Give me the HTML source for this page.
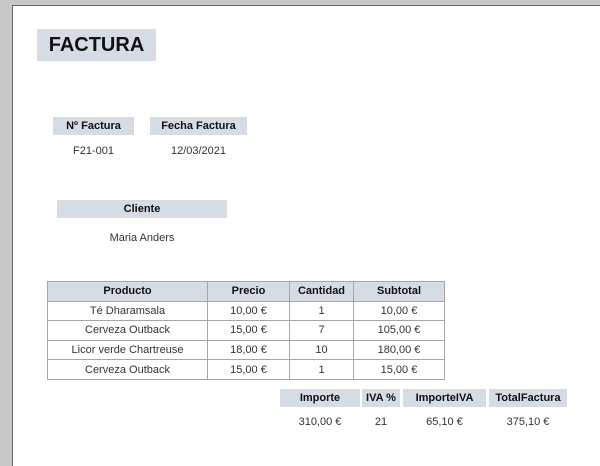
<!DOCTYPE html>
<html><head><meta charset="utf-8"><style>
body{margin:0;width:600px;height:455px;background:#c8c8c8;position:relative;overflow:hidden;font-family:"Liberation Sans",sans-serif;}
.page{position:absolute;left:12px;top:5px;width:600px;height:460px;background:#fff;border-left:1px solid #6a6a6a;border-top:1px solid #6a6a6a;}
.h{position:absolute;background:#d6dce4;font-weight:bold;font-size:11px;text-align:center;color:#111;line-height:19px;height:18px;}
.v{position:absolute;font-size:11px;text-align:center;color:#333;line-height:14px;}
table{position:absolute;left:47px;top:281px;border-collapse:collapse;font-size:11px;color:#333;}
td{border:1px solid #a6a6a6;height:18.6px;padding:0;text-align:center;}
tr.hd td{background:#d6dce4;font-weight:bold;color:#111;}
</style></head><body>
<div class="page"></div>
<div class="h" style="left:37px;top:29px;width:119px;height:32px;line-height:32px;font-size:20px;">FACTURA</div>
<div class="h" style="left:53px;top:117px;width:81px;">Nº Factura</div>
<div class="h" style="left:150px;top:117px;width:97px;">Fecha Factura</div>
<div class="v" style="left:53px;top:144px;width:81px;">F21-001</div>
<div class="v" style="left:150px;top:144px;width:97px;">12/03/2021</div>
<div class="h" style="left:57px;top:200px;width:170px;">Cliente</div>
<div class="v" style="left:57px;top:231px;width:170px;">Maria Anders</div>
<table>
<tr class="hd"><td style="width:159px">Producto</td><td style="width:81px">Precio</td><td style="width:63px">Cantidad</td><td style="width:90px">Subtotal</td></tr>
<tr><td>Té Dharamsala</td><td>10,00 €</td><td>1</td><td>10,00 €</td></tr>
<tr><td>Cerveza Outback</td><td>15,00 €</td><td>7</td><td>105,00 €</td></tr>
<tr><td>Licor verde Chartreuse</td><td>18,00 €</td><td>10</td><td>180,00 €</td></tr>
<tr><td>Cerveza Outback</td><td>15,00 €</td><td>1</td><td>15,00 €</td></tr>
</table>
<div class="h" style="left:280px;top:389px;width:80px;">Importe</div>
<div class="h" style="left:362px;top:389px;width:38px;">IVA %</div>
<div class="h" style="left:403px;top:389px;width:83px;">ImporteIVA</div>
<div class="h" style="left:489px;top:389px;width:78px;">TotalFactura</div>
<div class="v" style="left:280px;top:415px;width:80px;">310,00 €</div>
<div class="v" style="left:362px;top:415px;width:38px;">21</div>
<div class="v" style="left:403px;top:415px;width:83px;">65,10 €</div>
<div class="v" style="left:489px;top:415px;width:78px;">375,10 €</div>
</body></html>
